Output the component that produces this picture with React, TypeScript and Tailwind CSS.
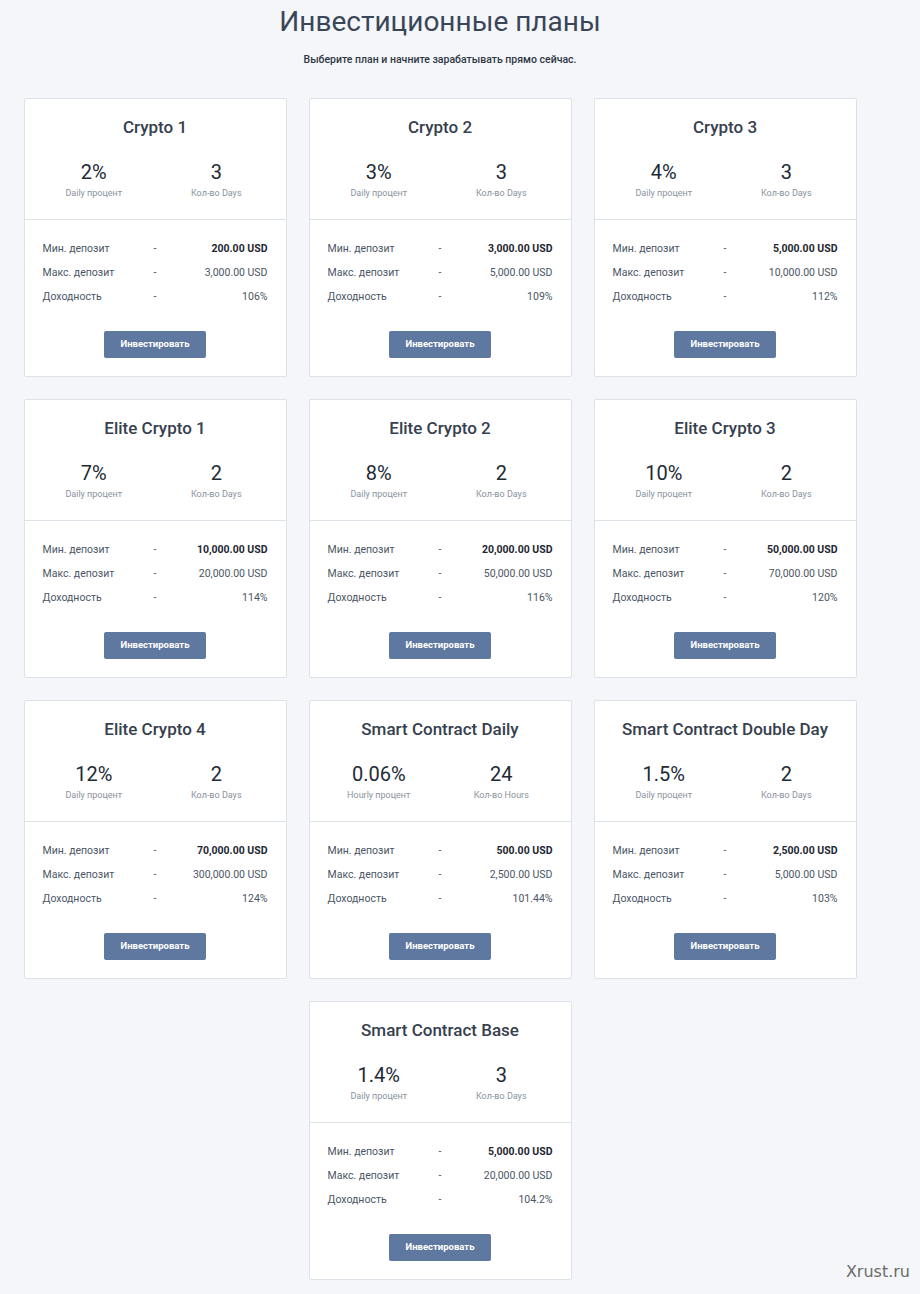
import React from "react";

type Plan = {
  name: string;
  rate: string;
  rateLabel: string;
  term: string;
  termLabel: string;
  min: string;
  max: string;
  profit: string;
};

const plans: Plan[] = [
  { name: "Crypto 1", rate: "2%", rateLabel: "Daily процент", term: "3", termLabel: "Кол-во Days", min: "200.00 USD", max: "3,000.00 USD", profit: "106%" },
  { name: "Crypto 2", rate: "3%", rateLabel: "Daily процент", term: "3", termLabel: "Кол-во Days", min: "3,000.00 USD", max: "5,000.00 USD", profit: "109%" },
  { name: "Crypto 3", rate: "4%", rateLabel: "Daily процент", term: "3", termLabel: "Кол-во Days", min: "5,000.00 USD", max: "10,000.00 USD", profit: "112%" },
  { name: "Elite Crypto 1", rate: "7%", rateLabel: "Daily процент", term: "2", termLabel: "Кол-во Days", min: "10,000.00 USD", max: "20,000.00 USD", profit: "114%" },
  { name: "Elite Crypto 2", rate: "8%", rateLabel: "Daily процент", term: "2", termLabel: "Кол-во Days", min: "20,000.00 USD", max: "50,000.00 USD", profit: "116%" },
  { name: "Elite Crypto 3", rate: "10%", rateLabel: "Daily процент", term: "2", termLabel: "Кол-во Days", min: "50,000.00 USD", max: "70,000.00 USD", profit: "120%" },
  { name: "Elite Crypto 4", rate: "12%", rateLabel: "Daily процент", term: "2", termLabel: "Кол-во Days", min: "70,000.00 USD", max: "300,000.00 USD", profit: "124%" },
  { name: "Smart Contract Daily", rate: "0.06%", rateLabel: "Hourly процент", term: "24", termLabel: "Кол-во Hours", min: "500.00 USD", max: "2,500.00 USD", profit: "101.44%" },
  { name: "Smart Contract Double Day", rate: "1.5%", rateLabel: "Daily процент", term: "2", termLabel: "Кол-во Days", min: "2,500.00 USD", max: "5,000.00 USD", profit: "103%" },
  { name: "Smart Contract Base", rate: "1.4%", rateLabel: "Daily процент", term: "3", termLabel: "Кол-во Days", min: "5,000.00 USD", max: "20,000.00 USD", profit: "104.2%" },
];

const Row = ({ label, value, bold }: { label: string; value: string; bold?: boolean }) => (
  <div className="grid grid-cols-[1fr_20px_1fr] items-center h-[24px] text-[10.5px] whitespace-nowrap">
    <span className="text-[#4a5565]">{label}</span>
    <span className="text-center text-[#4a5565]">-</span>
    <span className={bold ? "text-right font-bold text-[#1f2733]" : "text-right text-[#4a5565]"}>{value}</span>
  </div>
);

const PlanCard = ({ plan }: { plan: Plan }) => (
  <div className="w-[263px] h-[279px] bg-white border border-[#dde2e8] rounded-[2px] flex flex-col">
    <div className="h-[121px] border-b border-[#dde2e8] flex flex-col items-center pt-[17px]">
      <div className="text-[17px] font-medium text-[#36404e] leading-[22px] whitespace-nowrap">{plan.name}</div>
      <div className="w-full grid grid-cols-2 px-[8px] mt-[22px]">
        <div className="flex flex-col items-center">
          <span className="text-[20px] leading-[24px] text-[#222a35]">{plan.rate}</span>
          <span className="text-[9px] text-[#8a929c] mt-[3px]">{plan.rateLabel}</span>
        </div>
        <div className="flex flex-col items-center">
          <span className="text-[20px] leading-[24px] text-[#222a35]">{plan.term}</span>
          <span className="text-[9px] text-[#8a929c] mt-[3px]">{plan.termLabel}</span>
        </div>
      </div>
    </div>
    <div className="px-[18px] pt-[17px]">
      <Row label="Мин. депозит" value={plan.min} bold />
      <Row label="Макс. депозит" value={plan.max} />
      <Row label="Доходность" value={plan.profit} />
    </div>
    <div className="flex justify-center mt-[22px]">
      <button className="w-[102px] h-[27px] rounded-[2px] bg-[#5e78a0] text-white text-[9.5px] font-bold">
        Инвестировать
      </button>
    </div>
  </div>
);

export default function App() {
  return (
    <div
      className="min-h-[1294px] bg-[#f4f6fa] relative"
      style={{ fontFamily: "Roboto, 'Liberation Sans', sans-serif" }}
    >
      <div className="w-[880px] flex flex-col items-center">
        <h1 className="text-[28px] leading-[36px] text-[#3a4657] mt-[4px]">Инвестиционные планы</h1>
        <p className="text-[10.5px] font-medium text-[#2f3744] mt-[12px]">
          Выберите план и начните зарабатывать прямо сейчас.
        </p>
        <div className="grid grid-cols-3 gap-x-[22px] gap-y-[22px] mt-[30px]">
          {plans.slice(0, 9).map((p) => (
            <PlanCard key={p.name} plan={p} />
          ))}
          <div />
          <PlanCard plan={plans[9]} />
        </div>
      </div>
      <div
        className="absolute right-[10px] bottom-[10px] text-[16px] text-[#6b6b6b]"
        style={{ fontFamily: "'DejaVu Sans', sans-serif" }}
      >
        Xrust.ru
      </div>
    </div>
  );
}
